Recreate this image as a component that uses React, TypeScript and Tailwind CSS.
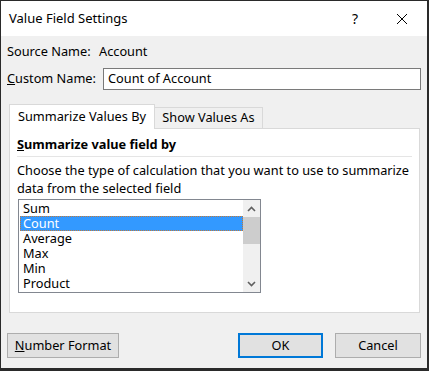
export default function App() {
  const items = ["Sum", "Count", "Average", "Max", "Min", "Product"]

  return (
    <div
      className="w-[429px] h-[371px] flex flex-col bg-[#f0f0f0] border-l border-t border-r-2 border-b-[3px] border-[#2a2a2a] text-[12.75px] text-black"
      style={{ fontFamily: '"Segoe UI", "Noto Sans", sans-serif' }}
    >
      {/* title bar */}
      <div className="h-[35px] bg-white flex items-center pl-[8px] shrink-0">
        <span className="text-[13px]">Value Field Settings</span>
        <div className="ml-auto flex items-center">
          <span className="text-[14px] w-[20px] text-center mr-[31px]">?</span>
          <svg width="12" height="12" viewBox="0 0 12 12" className="mr-[19px]">
            <path d="M1 1 L11 11 M11 1 L1 11" stroke="#000" strokeWidth="1" />
          </svg>
        </div>
      </div>

      <div className="flex flex-col px-[6px]">
        {/* source name */}
        <div className="mt-[7px] h-[18px] flex items-center">
          <span className="w-[92px]">Source Name:</span>
          <span>Account</span>
        </div>

        {/* custom name */}
        <div className="mt-[7px] flex items-center">
          <span className="w-[96px]">
            <span className="underline">C</span>ustom Name:
          </span>
          <div className="flex-1 h-[22px] bg-white border border-[#7a7a7a] flex items-center pl-[4px]">
            Count of Account
          </div>
        </div>

        {/* tabs */}
        <div className="mt-[14px] ml-[2px] flex items-end h-[24px]">
          <div className="h-[25px] w-[146px] bg-white border border-b-0 border-[#d9d9d9] flex items-center justify-center relative z-10 -mb-px">
            Summarize Values By
          </div>
          <div className="h-[21px] w-[108px] bg-[#f0f0f0] border border-l-0 border-b-0 border-[#d9d9d9] flex items-center justify-center">
            Show Values As
          </div>
        </div>

        {/* panel */}
        <div className="ml-[2px] mr-[1px] h-[185px] bg-white border border-[#d9d9d9] px-[7px] pt-[7px] flex flex-col">
          <div className="h-[18px] flex items-center font-bold">
            <span>
              <span className="underline">S</span>ummarize value field by
            </span>
          </div>
          <div className="mt-[2px] h-px bg-[#e5e5e5]" />
          <div className="mt-[4px] leading-[18px]">
            Choose the type of calculation that you want to use to summarize
            <br />
            data from the selected field
          </div>
          <div className="mt-[2px] ml-[1px] w-[243px] h-[94px] border border-[#828790] bg-white flex">
            <div className="flex-1 pt-[1px] pl-[1px]">
              {items.map((it) =>
                it === "Count" ? (
                  <div
                    key={it}
                    className="h-[15px] leading-[13px] pl-[2px] bg-[#3399ff] text-white border border-dotted border-[#c07a3a]"
                  >
                    {it}
                  </div>
                ) : (
                  <div key={it} className="h-[15px] leading-[15px] pl-[3px]">
                    {it}
                  </div>
                )
              )}
            </div>
            <div className="w-[17px] bg-[#f0f0f0] flex flex-col items-center">
              <div className="h-[17px] flex items-center justify-center">
                <svg width="9" height="6" viewBox="0 0 9 6">
                  <path d="M1 5 L4.5 1.5 L8 5" stroke="#606060" strokeWidth="1.6" fill="none" />
                </svg>
              </div>
              <div className="w-[17px] h-[27px] bg-[#cdcdcd]" />
              <div className="flex-1" />
              <div className="h-[17px] flex items-center justify-center">
                <svg width="9" height="6" viewBox="0 0 9 6">
                  <path d="M1 1 L4.5 4.5 L8 1" stroke="#606060" strokeWidth="1.6" fill="none" />
                </svg>
              </div>
            </div>
          </div>
        </div>

        {/* buttons */}
        <div className="mt-[20px] flex items-center">
          <button className="w-[112px] h-[25px] bg-[#e1e1e1] border border-[#adadad] flex items-center justify-center">
            <span>
              <span className="underline">N</span>umber Format
            </span>
          </button>
          <button className="ml-auto w-[85px] h-[25px] bg-[#e1e1e1] border-2 border-[#0078d7] flex items-center justify-center">
            OK
          </button>
          <button className="ml-[12px] w-[86px] h-[25px] bg-[#e1e1e1] border border-[#adadad] flex items-center justify-center">
            Cancel
          </button>
        </div>
      </div>
    </div>
  )
}
